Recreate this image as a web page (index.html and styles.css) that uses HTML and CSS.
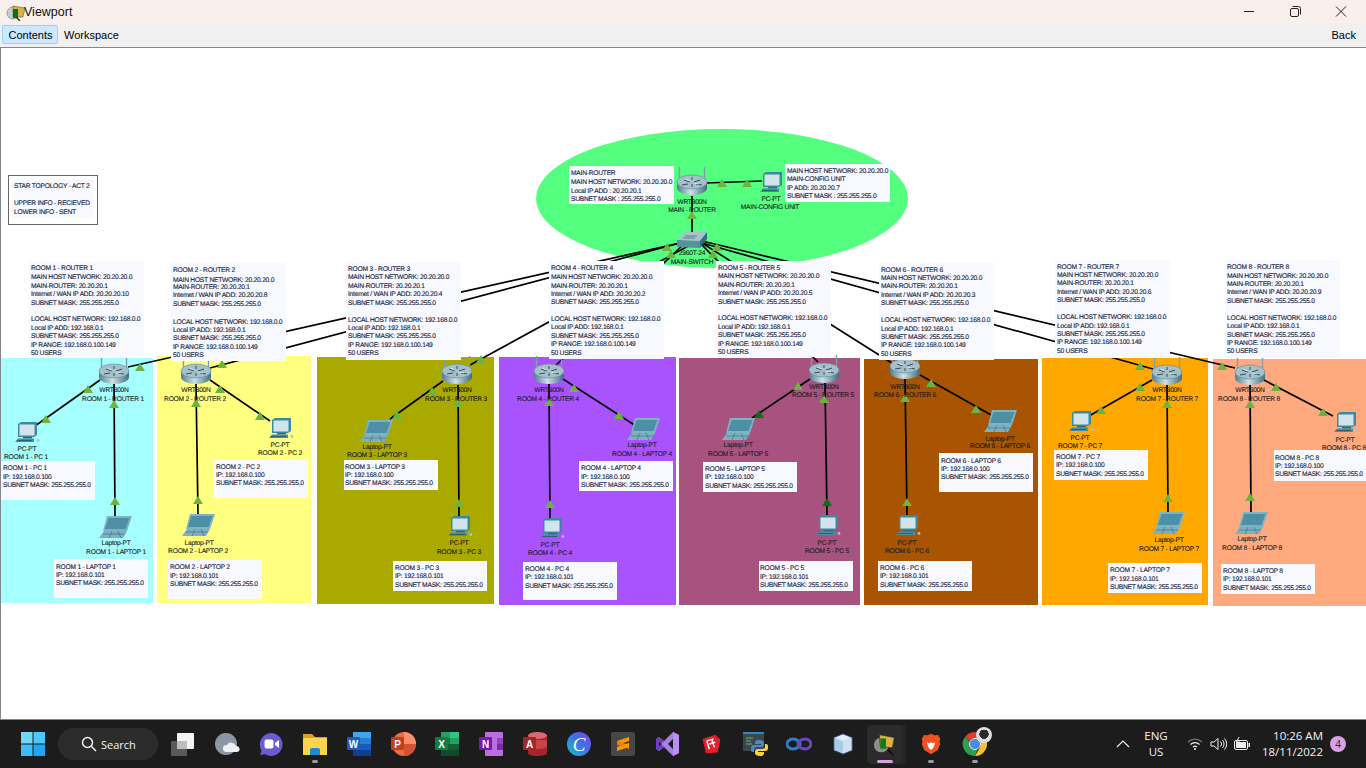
FILE: index.html
```html
<!DOCTYPE html>
<html lang="en">
<head>
<meta charset="utf-8">
<title>Viewport</title>
<link rel="stylesheet" href="styles.css">
</head>
<body>
<header class="titlebar">
  <svg class="appicon" width="22" height="17" viewBox="0 0 22 17"><circle cx="8" cy="9" r="6" fill="#c9cdc9" stroke="#9a9a9a"/><polygon points="8,2 20,4 18,13 8,13" fill="#d8b24a" stroke="#6b5a1c" stroke-width=".6"/><rect x="8" y="5" width="5" height="9" fill="#0c6e16"/><line x1="11" y1="13" x2="15" y2="17" stroke="#333" stroke-width="1.4"/></svg>
  <span class="title">Viewport</span>
  <div class="winctl">
    <svg width="46" height="23" viewBox="0 0 46 23"><line x1="18" y1="11.5" x2="28" y2="11.5" class="wi"/></svg>
    <svg width="46" height="23" viewBox="0 0 46 23"><rect x="18.5" y="8.5" width="8" height="8" rx="1.5" class="wi"/><path d="M20.5 6.5h6a2 2 0 0 1 2 2v6" class="wi"/></svg>
    <svg width="46" height="23" viewBox="0 0 46 23"><path d="M18 6.5l10 10M28 6.5l-10 10" class="wi"/></svg>
  </div>
</header>
<nav class="toolbar">
  <button class="tab tab-on">Contents</button>
  <button class="tab">Workspace</button>
  <button class="tab back">Back</button>
</nav>
<main class="viewport">
<svg class="stage" width="1365" height="671" viewBox="1 48 1365 671">
  <defs>
    <linearGradient id="rb" x1="0" x2="1" y1="0" y2="0"><stop offset="0" stop-color="#4e7f92"/><stop offset=".45" stop-color="#cfe0e6"/><stop offset="1" stop-color="#3d6d80"/></linearGradient>
    <polygon id="tri" points="-5,4 0,-4 5,4"/>
    <g id="router">
      <path d="M2.5 -8V7M27.5 -8V7" stroke="#7f9fa8" stroke-width="1.4" fill="none"/>
      <path d="M0 7v6a15 7 0 0 0 30 0v-6z" fill="url(#rb)"/>
      <ellipse cx="15" cy="7" rx="15" ry="7" fill="#a5c0ca" stroke="#5f8797" stroke-width=".6"/>
      <path d="M7 5l6 2M11 9l-6 1M23 5l-6 2M19 9l6 1M15 2v3M15 12V9" stroke="#2f4f5d" stroke-width="1" fill="none"/>
      <path d="M8 4l5 2M22 9l-5-1" stroke="#eef6f8" stroke-width=".7" fill="none"/>
    </g>
    <g id="pc">
      <polygon points="5,2 8,0 24,0 24,13 21,15 5,15" fill="#3c8aa0"/>
      <rect x="6.5" y="2.5" width="15" height="11" fill="#d3e3ea"/>
      <rect x="10" y="15" width="9" height="1.5" fill="#2d6a80"/>
      <polygon points="2,20 5,16.5 21,16.5 21,20" fill="#4a8ea4"/>
      <path d="M4 18.5h15" stroke="#1f4c5e" stroke-width=".7"/>
      <circle cx="25" cy="18.5" r="1.4" fill="#a9c3cb"/>
    </g>
    <g id="laptop">
      <polygon points="8,0 33,0 28,15 4,15" fill="#7fb3c1"/>
      <polygon points="9.5,2 30.5,2 26.5,13 6,13" fill="#4d8fa5"/>
      <polygon points="0,22 5,15 28,15 24,22" fill="#7eb1c0"/>
      <path d="M4 18h22M13 15l-3 7M19 15l3 7" stroke="#35697b" stroke-width=".6" fill="none"/>
    </g>
    <g id="switch">
      <polygon points="0,8 8,0 30,0 23,9" fill="#a6c3ce"/>
      <polygon points="0,8 23,9 23,16 0,15" fill="#5a8ea3"/>
      <polygon points="23,9 30,0 30,7 23,16" fill="#2f6c84"/>
      <path d="M8 4h12M6 6h12" stroke="#45707f" stroke-width=".8"/>
    </g>
  </defs>

  <ellipse class="bubble" cx="722" cy="198.500" rx="186" ry="69.500"/>
  <rect class="r1" x="1" y="358" width="152" height="245"/>
  <rect class="r2" x="157" y="356" width="154" height="247"/>
  <rect class="r3" x="317" y="357" width="177" height="247"/>
  <rect class="r4" x="499" y="357" width="177" height="248"/>
  <rect class="r5" x="679" y="358" width="181" height="247"/>
  <rect class="r6" x="864" y="359" width="174" height="246"/>
  <rect class="r7" x="1042" y="358" width="166" height="247"/>
  <rect class="r8" x="1213" y="359" width="153" height="247"/>

  <g class="links">
    <line x1="692" y1="196" x2="692" y2="233"/>
    <line x1="706" y1="183" x2="762" y2="181"/>
    <line x1="128" y1="367" x2="680" y2="243"/>
    <line x1="210" y1="368" x2="680" y2="243"/>
    <line x1="470" y1="365" x2="690" y2="245"/>
    <line x1="555" y1="366" x2="685" y2="243"/>
    <line x1="700" y1="243" x2="818" y2="362"/>
    <line x1="702" y1="243" x2="895" y2="365"/>
    <line x1="702" y1="243" x2="1153" y2="369"/>
    <line x1="702" y1="241" x2="1235" y2="368"/>
    <line x1="100" y1="380" x2="35" y2="426"/>
    <line x1="114" y1="384" x2="115" y2="516"/>
    <line x1="210" y1="380" x2="270" y2="421"/>
    <line x1="196" y1="384" x2="198" y2="514"/>
    <line x1="443" y1="381" x2="390" y2="419"/>
    <line x1="458" y1="385" x2="459" y2="516"/>
    <line x1="563" y1="379" x2="636" y2="426"/>
    <line x1="549" y1="384" x2="550" y2="518"/>
    <line x1="810" y1="379" x2="752" y2="418"/>
    <line x1="825" y1="383" x2="827" y2="515"/>
    <line x1="920" y1="375" x2="993" y2="416"/>
    <line x1="905" y1="379" x2="907" y2="515"/>
    <line x1="1152" y1="380" x2="1089" y2="416"/>
    <line x1="1167" y1="385" x2="1168" y2="512"/>
    <line x1="1262" y1="379" x2="1333" y2="416"/>
    <line x1="1250" y1="384" x2="1251" y2="512"/>
  </g>

  <g class="tris">
    <use href="#tri" x="692" y="215"/><use href="#tri" x="722" y="183"/><use href="#tri" x="747" y="183"/>
    <use href="#tri" x="667" y="247"/><use href="#tri" x="671" y="254"/><use href="#tri" x="713" y="254"/><use href="#tri" x="717" y="247"/>
    <use href="#tri" x="140" y="367"/><use href="#tri" x="222" y="364"/><use href="#tri" x="481" y="359"/><use href="#tri" x="1140" y="366"/><use href="#tri" x="1222" y="366"/>
    <use href="#tri" x="88" y="389"/><use href="#tri" x="46" y="419"/><use href="#tri" x="114" y="404"/><use href="#tri" x="115" y="501"/>
    <use href="#tri" x="220" y="389"/><use href="#tri" x="260" y="416"/><use href="#tri" x="196" y="403"/><use href="#tri" x="198" y="500"/>
    <use href="#tri" x="432" y="391"/><use href="#tri" x="397" y="415"/><use href="#tri" x="458" y="403"/><use href="#tri" x="459" y="503"/>
    <use href="#tri" x="574" y="388"/><use href="#tri" x="619" y="415"/><use href="#tri" x="549" y="402"/><use href="#tri" x="550" y="504"/>
    <use href="#tri" x="798" y="386"/><use href="#tri" x="824" y="399"/><use class="tri-dark" href="#tri" x="759" y="414"/><use class="tri-dark" href="#tri" x="827" y="502"/>
    <use href="#tri" x="931" y="383"/><use href="#tri" x="976" y="409"/><use href="#tri" x="905" y="398"/><use href="#tri" x="907" y="502"/>
    <use href="#tri" x="1140" y="387"/><use href="#tri" x="1101" y="410"/><use href="#tri" x="1167" y="404"/><use href="#tri" x="1168" y="498"/>
    <use href="#tri" x="1276" y="387"/><use href="#tri" x="1323" y="412"/><use href="#tri" x="1250" y="404"/><use href="#tri" x="1250" y="497"/>
  </g>

  <use href="#router" x="677" y="175"/><use href="#pc" x="758" y="172"/><use href="#switch" x="677" y="232"/>
  <use href="#router" x="99" y="364"/><use href="#router" x="181" y="364"/><use href="#router" x="442" y="364"/><use href="#router" x="534" y="364"/>
  <use href="#router" x="809" y="363"/><use href="#router" x="890" y="359"/><use href="#router" x="1152" y="365"/><use href="#router" x="1235" y="365"/>
  <use href="#pc" x="13" y="422"/><use href="#laptop" x="99" y="516"/>
  <use href="#pc" x="267" y="418"/><use href="#laptop" x="182" y="514"/>
  <use href="#laptop" x="360" y="420"/><use href="#pc" x="446" y="516"/>
  <use href="#laptop" x="627" y="418"/><use href="#pc" x="538" y="518"/>
  <use href="#laptop" x="722" y="418"/><use href="#pc" x="814" y="515"/>
  <use href="#laptop" x="984" y="410"/><use href="#pc" x="894" y="515"/>
  <use href="#pc" x="1067" y="411"/><use href="#laptop" x="1152" y="512"/>
  <use href="#pc" x="1332" y="412"/><use href="#laptop" x="1235" y="512"/>

  <g class="dl">
    <text x="692" y="203.500">WRT300N</text><text x="692" y="211.500">MAIN - ROUTER</text>
    <text x="771" y="200.500">PC-PT</text><text x="770" y="208.500">MAIN-CONFIG UNIT</text>
    <text x="692" y="254.500">2960T-24</text><text x="692" y="263.500">MAIN-SWITCH</text>
    <text x="114" y="391.500">WRT300N</text><text x="113" y="400.500">ROOM 1 - ROUTER 1</text>
    <text x="27" y="450.500">PC-PT</text><text x="26" y="458.500">ROOM 1 - PC 1</text>
    <text x="116" y="544.500">Laptop-PT</text><text x="116" y="553.500">ROOM 1 - LAPTOP 1</text>
    <text x="196" y="391.500">WRT300N</text><text x="195" y="400.500">ROOM 2 - ROUTER 2</text>
    <text x="280" y="446.500">PC-PT</text><text x="280" y="454.500">ROOM 2 - PC 2</text>
    <text x="199" y="544.500">Laptop-PT</text><text x="198" y="552.500">ROOM 2 - LAPTOP 2</text>
    <text x="457" y="391.500">WRT300N</text><text x="456" y="400.500">ROOM 3 - ROUTER 3</text>
    <text x="377" y="448.500">Laptop-PT</text><text x="377" y="456.500">ROOM 3 - LAPTOP 3</text>
    <text x="459" y="544.500">PC-PT</text><text x="459" y="553.500">ROOM 3 - PC 3</text>
    <text x="549" y="391.500">WRT300N</text><text x="548" y="400.500">ROOM 4 - ROUTER 4</text>
    <text x="642" y="446.500">Laptop-PT</text><text x="642" y="455.500">ROOM 4 - LAPTOP 4</text>
    <text x="550" y="546.500">PC-PT</text><text x="550" y="554.500">ROOM 4 - PC 4</text>
    <text x="824" y="388.500">WRT300N</text><text x="823" y="396.500">ROOM 5 - ROUTER 5</text>
    <text x="738" y="446.500">Laptop-PT</text><text x="738" y="455.500">ROOM 5 - LAPTOP 5</text>
    <text x="827" y="544.500">PC-PT</text><text x="827" y="552.500">ROOM 5 - PC 5</text>
    <text x="905" y="388.500">WRT300N</text><text x="905" y="396.500">ROOM 6 - ROUTER 6</text>
    <text x="1000" y="440.500">Laptop-PT</text><text x="1000" y="447.500">ROOM 6 - LAPTOP 6</text>
    <text x="907" y="544.500">PC-PT</text><text x="907" y="552.500">ROOM 6 - PC 6</text>
    <text x="1167" y="391.500">WRT300N</text><text x="1167" y="400.500">ROOM 7 - ROUTER 7</text>
    <text x="1080" y="439.500">PC-PT</text><text x="1080" y="447.500">ROOM 7 - PC 7</text>
    <text x="1169" y="541.500">Laptop-PT</text><text x="1169" y="550.500">ROOM 7 - LAPTOP 7</text>
    <text x="1250" y="391.500">WRT300N</text><text x="1249" y="400.500">ROOM 8 - ROUTER 8</text>
    <text x="1345" y="441.500">PC-PT</text><text x="1344" y="449.500">ROOM 8 - PC 8</text>
    <text x="1252" y="540.500">Laptop-PT</text><text x="1252" y="549.500">ROOM 8 - LAPTOP 8</text>
  </g>

  <rect class="frame" x="8.500" y="175.500" width="89" height="49"/>
  <g class="notes">
    <rect x="12" y="179" width="82" height="39"/>
    <rect x="569" y="166" width="105" height="38"/><rect x="785" y="164" width="105" height="38"/>
    <rect x="29" y="261" width="115" height="97"/><rect x="171" y="263" width="115" height="98"/><rect x="346" y="262" width="115" height="98"/><rect x="549" y="261" width="115" height="98"/>
    <rect x="716" y="261" width="115" height="96"/><rect x="879" y="263" width="115" height="97"/><rect x="1055" y="260" width="115" height="98"/><rect x="1225" y="260" width="115" height="98"/>
    <rect x="1" y="461" width="94" height="39"/><rect x="54" y="559" width="94" height="39"/>
    <rect x="214" y="460" width="94" height="38"/><rect x="168" y="560" width="94" height="39"/>
    <rect x="344" y="460" width="94" height="30"/><rect x="393" y="561" width="94" height="30"/>
    <rect x="579" y="461" width="94" height="30"/><rect x="523" y="562" width="94" height="38"/>
    <rect x="703" y="462" width="94" height="30"/><rect x="759" y="561" width="94" height="30"/>
    <rect x="939" y="453" width="94" height="39"/><rect x="878" y="561" width="94" height="30"/>
    <rect x="1054" y="450" width="94" height="30"/><rect x="1108" y="563" width="94" height="30"/>
    <rect x="1274" y="450" width="92" height="31"/><rect x="1221" y="564" width="94" height="30"/>
  </g>
  <g class="nt">
    <text x="14" y="187.500">STAR TOPOLOGY - ACT 2</text><text x="14" y="204.500">UPPER INFO - RECIEVED</text><text x="14" y="213.500">LOWER INFO - SENT</text>

    <text x="571" y="174.500">MAIN-ROUTER</text><text x="571" y="183.500">MAIN HOST NETWORK: 20.20.20.0</text><text x="571" y="192.500">Local IP ADD : 20.20.20.1</text><text x="571" y="200.500">SUBNET MASK : 255.255.255.0</text>
    <text x="787" y="172.500">MAIN HOST NETWORK: 20.20.20.0</text><text x="787" y="180.500">MAIN-CONFIG UNIT</text><text x="787" y="189.500">IP ADD: 20.20.20.7</text><text x="787" y="197.500">SUBNET MASK : 255.255.255.0</text>

    <text x="31" y="269.500">ROOM 1 - ROUTER 1</text><text x="31" y="278.500">MAIN HOST NETWORK: 20.20.20.0</text><text x="31" y="287.500">MAIN-ROUTER: 20.20.20.1</text><text x="31" y="295.500">Internet / WAN IP ADD: 20.20.20.10</text><text x="31" y="304.500">SUBNET MASK: 255.255.255.0</text><text x="31" y="320.500">LOCAL HOST NETWORK: 192.168.0.0</text><text x="31" y="329.500">Local IP ADD: 192.168.0.1</text><text x="31" y="337.500">SUBNET MASK: 255.255.255.0</text><text x="31" y="346.500">IP RANGE: 192.168.0.100.149</text><text x="31" y="354.500">50 USERS</text>

    <text x="173" y="271.500">ROOM 2 - ROUTER 2</text><text x="173" y="281.500">MAIN HOST NETWORK: 20.20.20.0</text><text x="173" y="288.500">MAIN-ROUTER: 20.20.20.1</text><text x="173" y="296.500">Internet / WAN IP ADD: 20.20.20.8</text><text x="173" y="305.500">SUBNET MASK: 255.255.255.0</text><text x="173" y="323.500">LOCAL HOST NETWORK: 192.168.0.0</text><text x="173" y="331.500">Local IP ADD: 192.168.0.1</text><text x="173" y="339.500">SUBNET MASK: 255.255.255.0</text><text x="173" y="348.500">IP RANGE: 192.168.0.100.149</text><text x="173" y="356.500">50 USERS</text>

    <text x="348" y="270.500">ROOM 3 - ROUTER 3</text><text x="348" y="278.500">MAIN HOST NETWORK: 20.20.20.0</text><text x="348" y="287.500">MAIN-ROUTER: 20.20.20.1</text><text x="348" y="295.500">Internet / WAN IP ADD: 20.20.20.4</text><text x="348" y="304.500">SUBNET MASK: 255.255.255.0</text><text x="348" y="321.500">LOCAL HOST NETWORK: 192.168.0.0</text><text x="348" y="329.500">Local IP ADD: 192.168.0.1</text><text x="348" y="337.500">SUBNET MASK: 255.255.255.0</text><text x="348" y="346.500">IP RANGE: 192.168.0.100.149</text><text x="348" y="354.500">50 USERS</text>

    <text x="551" y="269.500">ROOM 4 - ROUTER 4</text><text x="551" y="278.500">MAIN HOST NETWORK: 20.20.20.0</text><text x="551" y="287.500">MAIN-ROUTER: 20.20.20.1</text><text x="551" y="295.500">Internet / WAN IP ADD: 20.20.20.2</text><text x="551" y="303.500">SUBNET MASK: 255.255.255.0</text><text x="551" y="320.500">LOCAL HOST NETWORK: 192.168.0.0</text><text x="551" y="328.500">Local IP ADD: 192.168.0.1</text><text x="551" y="337.500">SUBNET MASK: 255.255.255.0</text><text x="551" y="345.500">IP RANGE: 192.168.0.100.149</text><text x="551" y="354.500">50 USERS</text>

    <text x="718" y="269.500">ROOM 5 - ROUTER 5</text><text x="718" y="277.500">MAIN HOST NETWORK: 20.20.20.0</text><text x="718" y="286.500">MAIN-ROUTER: 20.20.20.1</text><text x="718" y="294.500">Internet / WAN IP ADD: 20.20.20.5</text><text x="718" y="303.500">SUBNET MASK: 255.255.255.0</text><text x="718" y="319.500">LOCAL HOST NETWORK: 192.168.0.0</text><text x="718" y="328.500">Local IP ADD: 192.168.0.1</text><text x="718" y="336.500">SUBNET MASK: 255.255.255.0</text><text x="718" y="345.500">IP RANGE: 192.168.0.100.149</text><text x="718" y="353.500">50 USERS</text>

    <text x="881" y="271.500">ROOM 6 - ROUTER 6</text><text x="881" y="279.500">MAIN HOST NETWORK: 20.20.20.0</text><text x="881" y="287.500">MAIN-ROUTER: 20.20.20.1</text><text x="881" y="296.500">Internet / WAN IP ADD: 20.20.20.3</text><text x="881" y="304.500">SUBNET MASK: 255.255.255.0</text><text x="881" y="321.500">LOCAL HOST NETWORK: 192.168.0.0</text><text x="881" y="330.500">Local IP ADD: 192.168.0.1</text><text x="881" y="338.500">SUBNET MASK: 255.255.255.0</text><text x="881" y="346.500">IP RANGE: 192.168.0.100.149</text><text x="881" y="355.500">50 USERS</text>

    <text x="1057" y="268.500">ROOM 7 - ROUTER 7</text><text x="1057" y="276.500">MAIN HOST NETWORK: 20.20.20.0</text><text x="1057" y="284.500">MAIN-ROUTER: 20.20.20.1</text><text x="1057" y="293.500">Internet / WAN IP ADD: 20.20.20.6</text><text x="1057" y="301.500">SUBNET MASK: 255.255.255.0</text><text x="1057" y="318.500">LOCAL HOST NETWORK: 192.168.0.0</text><text x="1057" y="327.500">Local IP ADD: 192.168.0.1</text><text x="1057" y="335.500">SUBNET MASK: 255.255.255.0</text><text x="1057" y="343.500">IP RANGE: 192.168.0.100.149</text><text x="1057" y="352.500">50 USERS</text>

    <text x="1227" y="268.500">ROOM 8 - ROUTER 8</text><text x="1227" y="277.500">MAIN HOST NETWORK: 20.20.20.0</text><text x="1227" y="285.500">MAIN-ROUTER: 20.20.20.1</text><text x="1227" y="293.500">Internet / WAN IP ADD: 20.20.20.9</text><text x="1227" y="302.500">SUBNET MASK: 255.255.255.0</text><text x="1227" y="319.500">LOCAL HOST NETWORK: 192.168.0.0</text><text x="1227" y="327.500">Local IP ADD: 192.168.0.1</text><text x="1227" y="336.500">SUBNET MASK: 255.255.255.0</text><text x="1227" y="344.500">IP RANGE: 192.168.0.100.149</text><text x="1227" y="352.500">50 USERS</text>

    <text x="3" y="469.500">ROOM 1 - PC 1</text><text x="3" y="478.500">IP: 192.168.0.100</text><text x="3" y="486.500">SUBNET MASK: 255.255.255.0</text>
    <text x="56" y="568.500">ROOM 1 - LAPTOP 1</text><text x="56" y="576.500">IP: 192.168.0.101</text><text x="56" y="584.500">SUBNET MASK: 255.255.255.0</text>
    <text x="216" y="468.500">ROOM 2 - PC 2</text><text x="216" y="476.500">IP: 192.168.0.100</text><text x="216" y="484.500">SUBNET MASK: 255.255.255.0</text>
    <text x="170" y="568.500">ROOM 2 - LAPTOP 2</text><text x="170" y="577.500">IP: 192.168.0.101</text><text x="170" y="585.500">SUBNET MASK: 255.255.255.0</text>
    <text x="345" y="468.500">ROOM 3 - LAPTOP 3</text><text x="345" y="476.500">IP: 192.168.0.100</text><text x="345" y="484.500">SUBNET MASK: 255.255.255.0</text>
    <text x="395" y="569.500">ROOM 3 - PC 3</text><text x="395" y="577.500">IP: 192.168.0.101</text><text x="395" y="586.500">SUBNET MASK: 255.255.255.0</text>
    <text x="581" y="469.500">ROOM 4 - LAPTOP 4</text><text x="581" y="478.500">IP: 192.168.0.100</text><text x="581" y="486.500">SUBNET MASK: 255.255.255.0</text>
    <text x="525" y="570.500">ROOM 4 - PC 4</text><text x="525" y="578.500">IP: 192.168.0.101</text><text x="525" y="587.500">SUBNET MASK: 255.255.255.0</text>
    <text x="705" y="470.500">ROOM 5 - LAPTOP 5</text><text x="705" y="478.500">IP: 192.168.0.100</text><text x="705" y="487.500">SUBNET MASK: 255.255.255.0</text>
    <text x="760" y="569.500">ROOM 5 - PC 5</text><text x="760" y="578.500">IP: 192.168.0.101</text><text x="760" y="586.500">SUBNET MASK: 255.255.255.0</text>
    <text x="941" y="462.500">ROOM 6 - LAPTOP 6</text><text x="941" y="470.500">IP: 192.168.0.100</text><text x="941" y="478.500">SUBNET MASK: 255.255.255.0</text>
    <text x="880" y="569.500">ROOM 6 - PC 6</text><text x="880" y="577.500">IP: 192.168.0.101</text><text x="880" y="586.500">SUBNET MASK: 255.255.255.0</text>
    <text x="1056" y="458.500">ROOM 7 - PC 7</text><text x="1056" y="466.500">IP: 192.168.0.100</text><text x="1056" y="475.500">SUBNET MASK: 255.255.255.0</text>
    <text x="1110" y="571.500">ROOM 7 - LAPTOP 7</text><text x="1110" y="580.500">IP: 192.168.0.101</text><text x="1110" y="588.500">SUBNET MASK: 255.255.255.0</text>
    <text x="1275" y="459.500">ROOM 8 - PC 8</text><text x="1275" y="467.500">IP: 192.168.0.100</text><text x="1275" y="475.500">SUBNET MASK: 255.255.255.0</text>
    <text x="1223" y="572.500">ROOM 8 - LAPTOP 8</text><text x="1223" y="580.500">IP: 192.168.0.101</text><text x="1223" y="589.500">SUBNET MASK: 255.255.255.0</text>
  </g>
</svg>
</main>

<footer class="taskbar">
  <div class="start">
    <svg width="24" height="24" viewBox="0 0 24 24"><rect width="11.500" height="11.500" fill="#6fd8f8"/><rect x="12.500" width="11.500" height="11.500" fill="#4cc8f8"/><rect y="12.500" width="11.500" height="11.500" fill="#3cbcf8"/><rect x="12.500" y="12.500" width="11.500" height="11.500" fill="#1ea6f4"/></svg>
  </div>
  <div class="search">
    <svg width="16" height="16" viewBox="0 0 16 16"><circle cx="6.500" cy="6.500" r="5" fill="none" stroke="#f2f2f2" stroke-width="1.500"/><line x1="10.200" y1="10.200" x2="15" y2="15" stroke="#f2f2f2" stroke-width="1.500"/></svg>
    <span>Search</span>
  </div>
  <div class="apps">
    <div class="app"><svg width="26" height="26" viewBox="0 0 26 26"><rect x="1" y="10" width="16" height="15" rx="1" fill="#5a5a5a"/><rect x="7" y="2" width="17" height="16" rx="1" fill="#f3f3f3"/><rect x="7" y="10" width="10" height="8" fill="#bdbdbd"/></svg></div>
    <div class="app"><svg width="26" height="26" viewBox="0 0 26 26"><circle cx="12" cy="13" r="11" fill="#8c97a3"/><path d="M12 21a3.500 3.500 0 0 1 1-7 5 5 0 0 1 9 1 3 3 0 0 1 1 6z" fill="#eef1f4"/></svg></div>
    <div class="app"><svg width="26" height="26" viewBox="0 0 26 26"><path d="M13 2a11.500 11.500 0 1 1-6 21.300L2 24l1.500-4.500A11.500 11.500 0 0 1 13 2z" fill="#6a5bd0"/><rect x="6.500" y="8.500" width="9" height="9" rx="2" fill="#fff"/><path d="M17 12l4-3v8l-4-3z" fill="#fff"/></svg></div>
    <div class="app"><svg width="26" height="26" viewBox="0 0 26 26"><path d="M1 3h9l3 3h12v18H1z" fill="#d6a21f"/><rect x="1" y="7" width="24" height="17" rx="1" fill="#fbd44e"/><path d="M8 24v-5a2 2 0 0 1 2-2h6a2 2 0 0 1 2 2v5z" fill="#1f88d0"/></svg></div>
    <div class="app"><svg width="26" height="26" viewBox="0 0 26 26"><rect x="7" y="1" width="18" height="6" fill="#41a5ee"/><rect x="7" y="7" width="18" height="6" fill="#2b7cd3"/><rect x="7" y="13" width="18" height="6" fill="#185abd"/><rect x="7" y="19" width="18" height="6" fill="#103f91"/><rect x="1" y="6" width="13" height="13" rx="1" fill="#1a5cc0"/><text class="tile" x="7.500" y="16.500">W</text></svg></div>
    <div class="app"><svg width="26" height="26" viewBox="0 0 26 26"><circle cx="14" cy="13" r="12" fill="#ed6c47"/><path d="M14 1a12 12 0 0 1 12 12H14z" fill="#ff8f6b"/><path d="M14 13h12a12 12 0 0 1-12 12z" fill="#d35230"/><rect x="1" y="6" width="13" height="13" rx="1" fill="#c43e1c"/><text class="tile" x="7.500" y="16.500">P</text></svg></div>
    <div class="app"><svg width="26" height="26" viewBox="0 0 26 26"><rect x="7" y="1" width="9" height="6" fill="#21a366"/><rect x="16" y="1" width="9" height="6" fill="#33c481"/><rect x="7" y="7" width="9" height="6" fill="#107c41"/><rect x="16" y="7" width="9" height="6" fill="#21a366"/><rect x="7" y="13" width="18" height="6" fill="#185c37"/><rect x="7" y="19" width="18" height="6" fill="#0f4a2a"/><rect x="1" y="6" width="13" height="13" rx="1" fill="#107c41"/><text class="tile" x="7.500" y="16.500">X</text></svg></div>
    <div class="app"><svg width="26" height="26" viewBox="0 0 26 26"><rect x="7" y="1" width="18" height="24" rx="1" fill="#ba6fe0"/><rect x="19" y="7" width="6" height="6" fill="#9a3fc0"/><rect x="19" y="13" width="6" height="6" fill="#7d2ba5"/><rect x="1" y="6" width="13" height="13" rx="1" fill="#7719aa"/><text class="tile" x="7.500" y="16.500">N</text></svg></div>
    <div class="app"><svg width="26" height="26" viewBox="0 0 26 26"><path d="M6 4v18c0 2 4 3 9 3s10-1 10-3V4z" fill="#a4262c"/><path d="M6 9v6c0 2 4 3 9 3s10-1 10-3V9z" fill="#c8444a"/><ellipse cx="15.500" cy="4.500" rx="9.500" ry="3.500" fill="#d96a6f"/><rect x="1" y="6" width="13" height="13" rx="1" fill="#a4262c"/><text class="tile" x="7.500" y="16.500">A</text></svg></div>
    <div class="app"><svg width="26" height="26" viewBox="0 0 26 26"><defs><linearGradient id="cv" x1="0" y1="1" x2="1" y2="0"><stop offset="0" stop-color="#18c3cf"/><stop offset=".55" stop-color="#3f6fe0"/><stop offset="1" stop-color="#8a3ff0"/></linearGradient></defs><circle cx="13" cy="13" r="12" fill="url(#cv)"/><text class="canva" x="13" y="20">C</text></svg></div>
    <div class="app"><svg width="26" height="26" viewBox="0 0 26 26"><rect x="1" y="1" width="24" height="24" rx="2" fill="#474747"/><polygon points="7,10 19,6 19,10 7,14" fill="#ff9800"/><polygon points="7,10 19,14 19,18 7,14" fill="#e67e00"/><polygon points="7,16 19,12 19,16 7,20" fill="#ff9800"/></svg></div>
    <div class="app"><svg width="26" height="26" viewBox="0 0 26 26"><path d="M19 1l6 3v18l-6 3-9-9-5 4-3-2V8l3-2 5 4zM19 8l-5 5 5 5zM5 10v6l3-3z" fill="#a57ee6" fill-rule="evenodd"/><path d="M19 1l6 3v18l-6 3z" fill="#b98ff0"/><path d="M2 8l3-2 5 4-3 3-2-3v6l2-3 3 3-5 4-3-2z" fill="#6b3fb8"/></svg></div>
    <div class="app"><svg width="22" height="22" viewBox="0 0 26 26"><polygon points="3,7 18,2 24,8 21,23 7,24" fill="#e4202a"/><path d="M9 9l7-2M11 13l7-2M8 9l3 10M14 8l3 9" stroke="#fff" stroke-width="1.700" fill="none"/></svg></div>
    <div class="app"><svg width="26" height="26" viewBox="0 0 26 26"><rect x="1" y="1" width="21" height="19" fill="#3a4650"/><rect x="1" y="1" width="21" height="2" fill="#2f86c5"/><path d="M4 7h7M4 10h5M4 13h6" stroke="#6fb86a" stroke-width="1"/><path d="M17 9c-4 0-4 2-4 4h6v1h-7c-2 0-3 1-3 4s1 3 3 3v-3c0-1 1-2 3-2h4c2 0 3-1 3-3v-1c0-2-2-3-5-3z" fill="#4b8bbe"/><path d="M18 25c4 0 4-2 4-4h-6v-1h7c2 0 3-1 3-4s-1-3-3-3v3c0 1-1 2-3 2h-4c-2 0-3 1-3 3v1c0 2 2 3 5 3z" fill="#ffd43b"/></svg></div>
    <div class="app"><svg width="26" height="26" viewBox="0 0 26 26"><path d="M7 8c-4 0-6 3-6 5s2 5 6 5 7-3 7-5-3-5-7-5z" fill="none" stroke="#2e7fd0" stroke-width="3"/><path d="M19 8c-4 0-7 3-7 5s3 5 7 5 6-3 6-5-2-5-6-5z" fill="none" stroke="#6a46c4" stroke-width="3"/></svg></div>
    <div class="app"><svg width="24" height="24" viewBox="0 0 26 26"><polygon points="13,2 23,6 23,20 13,24 3,20 3,6" fill="#a8cbe8"/><polygon points="13,2 23,6 13,10 3,6" fill="#e0eefa"/><polygon points="13,10 23,6 23,20 13,24" fill="#cfe0ee"/><polygon points="13,2 23,6 23,20 13,24 3,20 3,6" fill="none" stroke="#23306a" stroke-width="1"/></svg></div>
    <div class="app app-on"><svg width="26" height="26" viewBox="0 0 28 26"><circle cx="10" cy="14" r="8" fill="#8b8f8b"/><polygon points="8,3 24,6 22,17 9,16" fill="#d8b24a" stroke="#3b2f0e" stroke-width=".8"/><rect x="9" y="7" width="6" height="11" fill="#0f7a1a"/><line x1="17" y1="19" x2="23" y2="25" stroke="#111" stroke-width="2"/></svg></div>
    <div class="app"><svg width="22" height="24" viewBox="0 0 26 26"><path d="M13 1l5 2 3-1 3 5-1 3 1 3-3 7-8 5-8-5-3-7 1-3-1-3 3-5 3 1z" fill="#f1501f"/><path d="M8 11l3 1 2-1 2 1 3-1-2 6-3 3-3-3z" fill="#fff"/></svg></div>
    <div class="app"><svg width="26" height="26" viewBox="0 0 26 26"><path d="M13 1a12 12 0 0 1 10.400 6H13a6 6 0 0 0-5.600 3.800L3.800 5A12 12 0 0 1 13 1z" fill="#e33b2e"/><path d="M23.400 7A12 12 0 0 1 13 25l5.200-9a6 6 0 0 0-.4-6.500z" fill="#fbc02d"/><path d="M13 25A12 12 0 0 1 3.800 5l5.200 9a6 6 0 0 0 6.500 4.500z" fill="#2e9e4f"/><circle cx="13" cy="13" r="5" fill="#4a8cf0"/><circle cx="13" cy="13" r="5.500" fill="none" stroke="#fff" stroke-width="1"/></svg>
      <span class="avatar"></span></div>
  </div>
  <div class="tray">
    <svg width="14" height="8" viewBox="0 0 14 8"><path d="M1 7l6-6 6 6" fill="none" stroke="#eee" stroke-width="1.200"/></svg>
    <div class="lang"><span>ENG</span><span>US</span></div>
    <div class="sys">
      <svg width="16" height="14" viewBox="0 0 16 14"><path d="M1 5a10 10 0 0 1 14 0" fill="none" stroke="#777" stroke-width="1.200"/><path d="M3.500 7.500a6.500 6.500 0 0 1 9 0M6 10a3 3 0 0 1 4 0" fill="none" stroke="#eee" stroke-width="1.200"/><circle cx="8" cy="12" r="1.100" fill="#eee"/></svg>
      <svg width="17" height="14" viewBox="0 0 17 14"><path d="M1 5h3l4-3.500v11L4 9H1z" fill="none" stroke="#eee"/><path d="M10.500 4.500a3.500 3.500 0 0 1 0 5M12.500 3a6 6 0 0 1 0 8M14.500 1.500a8 8 0 0 1 0 11" fill="none" stroke="#eee"/></svg>
      <svg width="17" height="14" viewBox="0 0 17 14"><rect x=".5" y="3.500" width="13" height="9" rx="1.500" fill="none" stroke="#eee"/><rect x="14.500" y="6" width="1.500" height="4" fill="#eee"/><rect x="2" y="5" width="10" height="6" fill="#eee"/><path d="M5 0L2.500 5H6L4 9" fill="none" stroke="#eee" stroke-width="1"/></svg>
    </div>
    <div class="clock"><span>10:26 AM</span><span>18/11/2022</span></div>
    <span class="badge">4</span>
  </div>
</footer>
</body>
</html>
```
FILE: styles.css
```css
* { box-sizing: border-box; }
html, body { margin: 0; padding: 0; }
body { width: 1366px; height: 768px; overflow: hidden; display: flex; flex-direction: column; font-family: "Liberation Sans", Arial, sans-serif; background: #fff; }

.titlebar { height: 23px; flex: none; background: #f9f0ee; display: flex; align-items: center; padding-left: 5px; }
.appicon { flex: none; margin-top: 1px; }
.title { margin-left: -3px; font: 12.5px "Liberation Sans", Arial, sans-serif; color: #111; }
.winctl { margin-left: auto; display: flex; margin-right: 2px; }
.wi { fill: none; stroke: #222; stroke-width: 1; }

.toolbar { height: 24px; flex: none; background: #f0f0f0; display: flex; align-items: center; padding: 0 9px 1px 2px; }
.tab { font: 11px "Liberation Sans", Arial, sans-serif; color: #000; background: none; border: 1px solid transparent; height: 19px; padding: 0 5px; margin: 0; }
.tab-on { width: 56px; padding: 1px 0 0 1px; background: #cce8ff; border-color: #99d1ff; border-radius: 2px; }
.back { margin-left: auto; padding: 0; }

.viewport { height: 673px; flex: none; background: #fff; border-top: 1px solid #84848c; border-bottom: 1px solid #84848c; border-left: 1px solid #84848c; }
.stage { display: block; }
.bubble { fill: #54ff80; }
.r1 { fill: #a6ffff; } .r2 { fill: #ffff80; } .r3 { fill: #a9a900; } .r4 { fill: #a953ff; }
.r5 { fill: #a8527f; } .r6 { fill: #a85400; } .r7 { fill: #ffa900; } .r8 { fill: #ffa97f; }
.links line { stroke: #000; stroke-width: 1.7; }
.tris { fill: #6fb33f; }
.tri-dark { fill: #0b6f10; }
.notes rect { fill: #f8f9ff; }
.frame { fill: #fff; stroke: #666; stroke-width: 1; }
.nt text { font: 6.7px "Liberation Sans", Arial, sans-serif; letter-spacing: -.25px; fill: #16233f; stroke: #16233f; stroke-width: .12px; text-rendering: geometricPrecision; }
.dl text { font: 6.7px "Liberation Sans", Arial, sans-serif; letter-spacing: -.25px; fill: #1c1c22; stroke: #1c1c22; stroke-width: .1px; text-anchor: middle; text-rendering: geometricPrecision; }

.taskbar { height: 48px; flex: none; background: #1c1c1c; display: flex; align-items: center; color: #f2f2f2; font-family: "Open Sans", "Liberation Sans", sans-serif; position: relative; }
.start { width: 24px; height: 24px; margin-left: 21px; flex: none; }
.start svg { display: block; }
.search { width: 100px; height: 32px; margin-left: 13px; flex: none; border-radius: 16px; background: #2c2c2c; display: flex; align-items: center; gap: 4px; padding-left: 23px; font-size: 11px; }
.apps { display: flex; align-items: center; margin-left: 3px; flex: none; }
.app { width: 44px; height: 48px; display: flex; align-items: center; justify-content: center; position: relative; }
.app svg { display: block; }
.apps .app:nth-child(4)::after, .apps .app:nth-child(18)::after, .apps .app:nth-child(19)::after { content: ""; position: absolute; left: 19px; bottom: 5px; width: 6px; height: 3px; border-radius: 2px; background: #9a9a9a; }
.app-on { width: 35px; height: 39px; margin: 0 7px 0 2px; background: #2b2b2b; border-radius: 4px; box-shadow: 4px 0 0 #262626; }
.app-on::after { content: ""; position: absolute; left: 10px; bottom: 1px; width: 16px; height: 3px; border-radius: 2px; background: #d9a0e0; }
.avatar { position: absolute; left: 23px; top: 7px; width: 16px; height: 16px; border-radius: 50%; background: radial-gradient(circle at 50% 45%, #2a2a2a 0 38%, #d9dde0 40% 100%); }
.tray { position: absolute; left: 1116px; top: 0; height: 48px; display: flex; align-items: center; }
.lang { width: 36px; margin-left: 8px; display: flex; flex-direction: column; align-items: center; font-size: 11.5px; line-height: 16px; }
.sys { display: flex; gap: 7px; margin-left: 13px; align-items: center; }
.clock { width: 70px; margin-left: 2px; display: flex; flex-direction: column; align-items: flex-end; font-size: 11.5px; line-height: 16px; }
.badge { width: 16px; height: 16px; margin-left: 7px; border-radius: 50%; background: #d9a0e6; color: #222; font-size: 10px; line-height: 16px; text-align: center; }
.tile { font: bold 10px "Liberation Sans", Arial, sans-serif; fill: #fff; text-anchor: middle; }
.canva { font: italic 19px "Liberation Serif", serif; fill: #fff; text-anchor: middle; }
```
